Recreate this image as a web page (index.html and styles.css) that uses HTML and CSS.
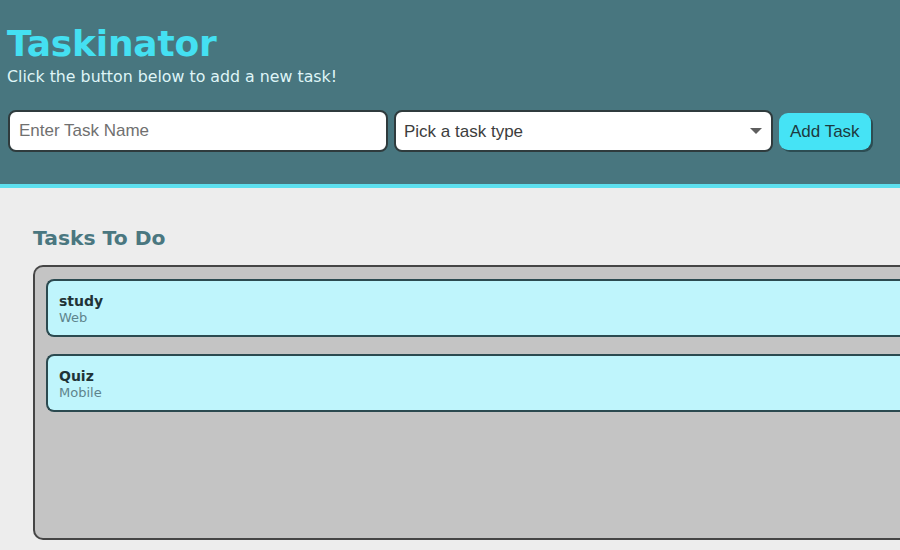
FILE: index.html
```html
<!DOCTYPE html>
<html lang="en">
<head>
<meta charset="utf-8">
<title>Taskinator</title>
<link rel="stylesheet" href="styles.css">
</head>
<body>
<header class="header">
  <h1 class="page-title">Taskinator</h1>
  <p class="subtitle">Click the button below to add a new task!</p>
  <form class="task-form">
    <input class="text-input" type="text" placeholder="Enter Task Name">
    <div class="select-wrap">
      <select class="select-input">
        <option>Pick a task type</option>
        <option>Web</option>
        <option>Mobile</option>
        <option>Print</option>
      </select>
    </div>
    <button class="btn" type="button">Add Task</button>
  </form>
</header>
<main class="page-content">
  <section class="task-list-wrapper">
    <h2 class="list-title">Tasks To Do</h2>
    <ul class="task-list">
      <li class="task-item">
        <div class="task-info">
          <h3 class="task-name">study</h3>
          <span class="task-type">Web</span>
        </div>
      </li>
      <li class="task-item">
        <div class="task-info">
          <h3 class="task-name">Quiz</h3>
          <span class="task-type">Mobile</span>
        </div>
      </li>
    </ul>
  </section>
</main>
</body>
</html>
```

FILE: styles.css
```css
* {
  box-sizing: border-box;
}

html, body {
  margin: 0;
  padding: 0;
  overflow: hidden;
}

body {
  background: #ededed;
  font-family: "DejaVu Sans", Verdana, sans-serif;
}

.header {
  background: #48767f;
  padding: 24px 7px 32px 7px;
  border-bottom: 4px solid #5ddfee;
}

.page-title {
  margin: 0;
  color: #44e0f2;
  font-size: 36px;
  font-weight: bold;
  line-height: 40px;
  letter-spacing: -0.2px;
}

.subtitle {
  margin: 3px 0 0 0;
  color: #dff5f7;
  font-size: 15.8px;
  line-height: 20px;
}

.task-form {
  display: flex;
  align-items: center;
  margin-top: 23px;
  gap: 6px;
}

.text-input,
.select-input {
  font-family: "Liberation Sans", Arial, sans-serif;
  font-size: 17px;
  height: 42px;
  border: 2px solid #2f3b3d;
  border-radius: 8px;
  background: #fff;
  color: #444;
  outline: none;
}

.text-input {
  width: 380px;
  margin-left: 1px;
  padding: 0 9px;
}

.text-input::placeholder {
  color: #707070;
}

.select-wrap {
  position: relative;
  width: 379px;
}

.select-input {
  width: 100%;
  appearance: none;
  -webkit-appearance: none;
  padding: 0 8px;
  color: #3d3d3d;
}

.select-wrap::after {
  content: "";
  position: absolute;
  right: 11px;
  top: 18px;
  border-left: 6px solid transparent;
  border-right: 6px solid transparent;
  border-top: 6px solid #5e5e5e;
  pointer-events: none;
}

.btn {
  font-family: "Liberation Sans", Arial, sans-serif;
  font-size: 17px;
  color: #1d3a40;
  background: #45e3f5;
  border: none;
  border-radius: 9px;
  height: 37px;
  padding: 0 11px;
  box-shadow: 2px 2px 0 #2c4d53;
  margin-top: 1px;
}

.page-content {
  padding: 0 0 0 33px;
}

.list-title {
  margin: 38px 0 0 0;
  color: #4a7780;
  font-size: 20.3px;
  line-height: 24px;
  font-weight: bold;
}

.task-list {
  list-style: none;
  margin: 15px 0 0 0;
  padding: 12px 0 12px 11px;
  background: #c4c4c4;
  border: 2px solid #454545;
  border-right: none;
  border-radius: 10px 0 0 10px;
  height: 275px;
}

.task-item {
  background: #bff5fc;
  border: 2px solid #2b4a50;
  border-right: none;
  border-radius: 8px 0 0 8px;
  padding: 12px 11px 10px 11px;
  margin-bottom: 17px;
}

.task-name {
  margin: 0;
  font-size: 14px;
  line-height: 17px;
  font-weight: bold;
  color: #1f3337;
}

.task-type {
  display: block;
  font-size: 13px;
  line-height: 15px;
  color: #5e848c;
}
```
